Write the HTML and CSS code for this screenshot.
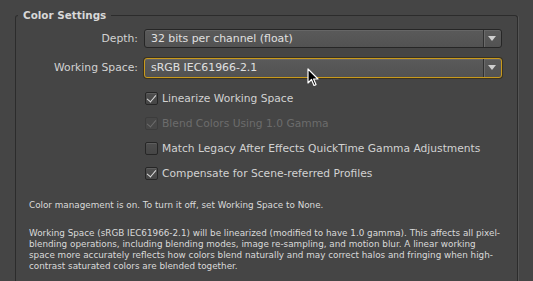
FILE: index.html
```html
<!DOCTYPE html>
<html lang="en">
<head>
  <meta charset="UTF-8" />
  <title>Color Settings</title>
  <link rel="stylesheet" href="styles.css">
</head>
<body>
  <fieldset class="group">
    <legend>Color Settings</legend>

    <div class="form-grid">
      <label class="field-label">Depth:</label>
      <div class="select">
        <span class="select-text">32 bits per channel (float)</span>
        <span class="select-arrow"></span>
      </div>

      <label class="field-label">Working Space:</label>
      <div class="select focused">
        <span class="select-text">sRGB IEC61966-2.1</span>
        <span class="select-arrow"></span>
        <!-- mouse pointer -->
        <svg class="cursor" width="13" height="20" viewBox="0 0 13 20">
          <path d="M1 1 L1 15 L4.5 11.5 L7 17.5 L9 16.6 L6.6 11 L11 11 Z" fill="#000" stroke="#fff" stroke-width="1.2" stroke-linejoin="round"/>
        </svg>
      </div>
    </div>

    <div class="checks">
      <label class="check">
        <span class="box checked"></span>
        Linearize Working Space
      </label>
      <label class="check disabled">
        <span class="box checked"></span>
        Blend Colors Using 1.0 Gamma
      </label>
      <label class="check">
        <span class="box"></span>
        Match Legacy After Effects QuickTime Gamma Adjustments
      </label>
      <label class="check">
        <span class="box checked"></span>
        Compensate for Scene-referred Profiles
      </label>
    </div>

    <p class="note">Color management is on. To turn it off, set Working Space to None.</p>
    <p class="note">Working Space (sRGB IEC61966-2.1) will be linearized (modified to have 1.0 gamma). This affects all pixel-<br>blending operations, including blending modes, image re-sampling, and motion blur. A linear working<br>space more accurately reflects how colors blend naturally and may correct halos and fringing when high-<br>contrast saturated colors are blended together.</p>
  </fieldset>
</body>
</html>
```

FILE: styles.css
```css
* {
  box-sizing: border-box;
}

body {
  margin: 0;
  height: 281px;
  overflow: hidden;
  background: #454545;
  font-family: "DejaVu Sans", sans-serif;
  color: #d2d2d2;
}

/* group box runs off the bottom of the window, so no bottom edge */
.group {
  margin: 8px 15px 0 15px;
  width: 503px;
  height: 273px;
  border: 1px solid #2c2c2c;
  border-bottom: none;
  border-radius: 3px 3px 0 0;
  padding: 0;
  box-shadow: 1px 0 0 #555;
}

.group legend {
  padding: 0 5px;
  margin-left: 2px;
  font-size: 10.4px;
  line-height: 14px;
  font-weight: bold;
  color: #d8d8d8;
}

.form-grid {
  display: grid;
  grid-template-columns: 122px 358px;
  grid-template-rows: 19px 19px;
  column-gap: 6px;
  row-gap: 10px;
  align-items: center;
  margin-top: 7px;
}

.field-label {
  text-align: right;
  font-size: 10.8px;
}

.select {
  position: relative;
  height: 19px;
  display: flex;
  align-items: center;
  background: linear-gradient(#5a5a5a, #525252);
  border: 1px solid #262626;
  border-radius: 3px;
  box-shadow: inset 0 1px 0 #666;
  font-size: 10.9px;
  color: #e0e0e0;
}

.select.focused {
  height: 20px;
  border-color: #c99a1c;
  box-shadow: 0 0 0 1px #3a3220, inset 0 1px 0 #666;
}

.select-text {
  flex: 1;
  padding-left: 6px;
}

.select-arrow {
  width: 18px;
  height: 100%;
  border-left: 1px solid #303030;
  box-shadow: inset 1px 0 0 #6a6a6a;
  position: relative;
}

.select-arrow::after {
  content: "";
  position: absolute;
  left: 4px;
  top: 6px;
  border-left: 4px solid transparent;
  border-right: 4px solid transparent;
  border-top: 5px solid #cfcfcf;
}

.cursor {
  position: absolute;
  left: 162px;
  top: 9px;
}

.checks {
  display: flex;
  flex-direction: column;
  gap: 9px;
  margin: 13px 0 0 129px;
}

.check {
  display: flex;
  align-items: center;
  gap: 4px;
  font-size: 10.7px;
  height: 16px;
}

.box {
  width: 13px;
  height: 13px;
  border: 1px solid #262626;
  border-radius: 2px;
  background: linear-gradient(#4e4e4e, #464646);
  box-shadow: inset 0 1px 0 #5e5e5e;
  position: relative;
}

.box.checked::after {
  content: "";
  position: absolute;
  left: 3px;
  top: 0px;
  width: 4px;
  height: 8px;
  border-right: 1.5px solid #dcdcdc;
  border-bottom: 1.5px solid #dcdcdc;
  transform: rotate(40deg);
}

.check.disabled {
  color: #6c6c6c;
}

.check.disabled .box {
  border-color: #3c3c3c;
  background: #474747;
  box-shadow: none;
}

.check.disabled .box.checked::after {
  border-color: #6c6c6c;
}

.note {
  margin: 0 0 0 13px;
  font-size: 8.8px;
  line-height: 11px;
  color: #dadada;
  white-space: nowrap;
}

.note:first-of-type {
  margin-top: 19px;
}

.note + .note {
  margin-top: 17px;
}
```
